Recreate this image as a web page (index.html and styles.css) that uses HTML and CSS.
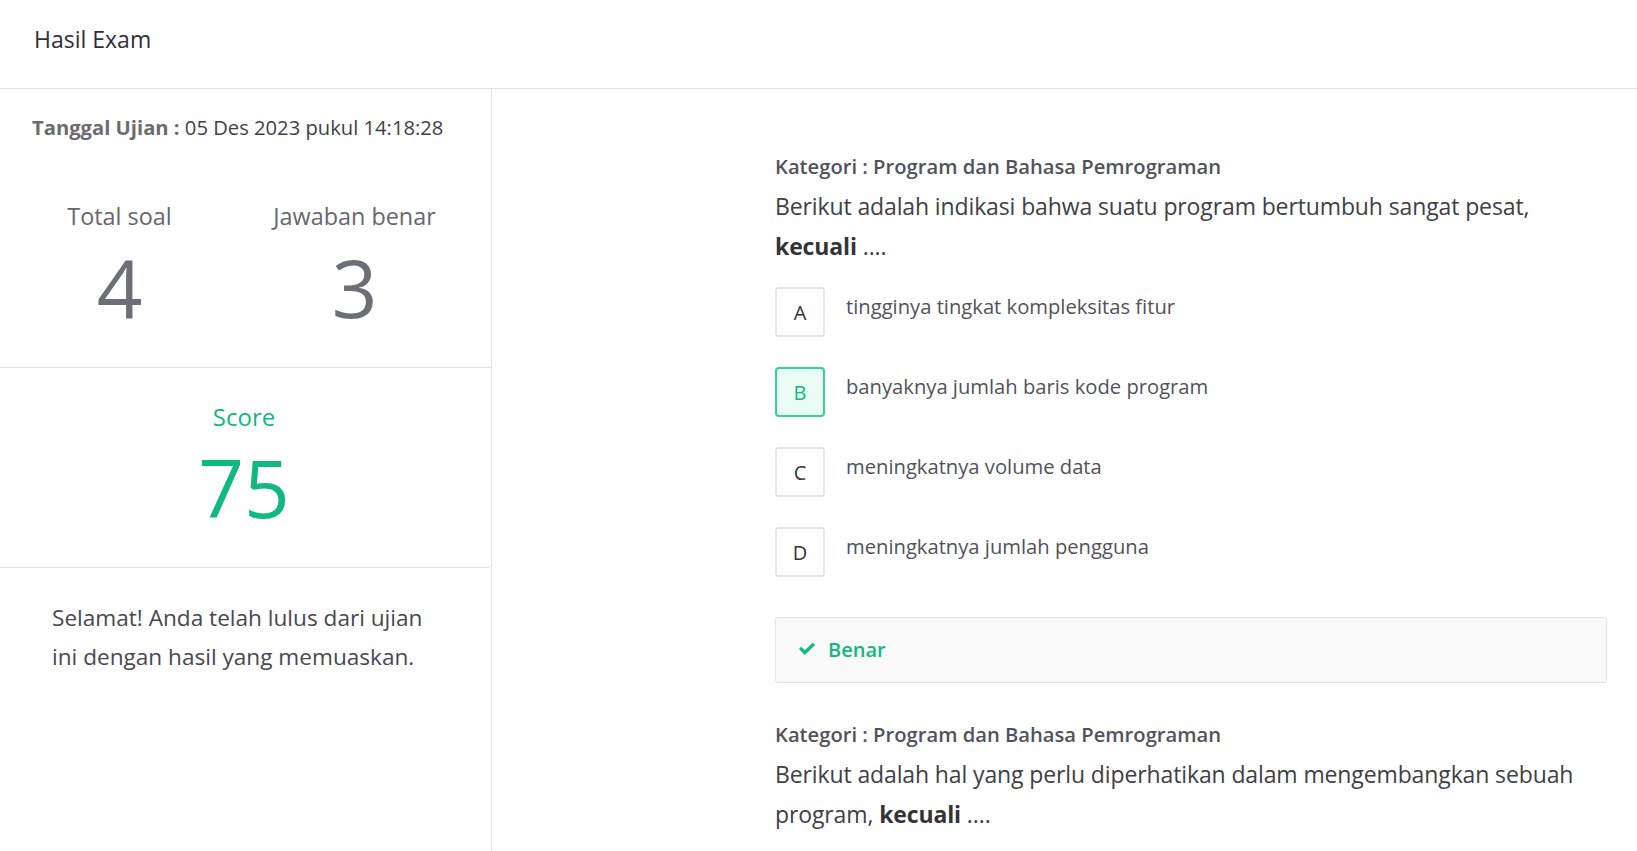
FILE: index.html
```html
<!DOCTYPE html>
<html lang="id">
<head>
<meta charset="utf-8">
<title>Hasil Exam</title>
<link rel="stylesheet" href="styles.css">
</head>
<body>
<header class="topbar">
  <h1 class="title">Hasil Exam</h1>
</header>
<main class="layout">
  <aside class="summary">
    <p class="exam-date"><strong>Tanggal Ujian :</strong> 05 Des 2023 pukul 14:18:28</p>
    <div class="stats-section">
      <div class="stats">
        <div class="stat">
          <div class="stat-label">Total soal</div>
          <div class="stat-value">4</div>
        </div>
        <div class="stat">
          <div class="stat-label">Jawaban benar</div>
          <div class="stat-value">3</div>
        </div>
      </div>
    </div>
    <div class="score-card">
      <div class="score-label">Score</div>
      <div class="score-value">75</div>
    </div>
    <p class="message">Selamat! Anda telah lulus dari ujian ini dengan hasil yang memuaskan.</p>
  </aside>
  <section class="questions">
    <div class="question-list">
      <article class="question">
        <div class="category">Kategori : Program dan Bahasa Pemrograman</div>
        <p class="question-text">Berikut adalah indikasi bahwa suatu program bertumbuh sangat pesat, <b>kecuali</b> ....</p>
        <ul class="options">
          <li class="option"><span class="opt-key">A</span><span class="opt-text">tingginya tingkat kompleksitas fitur</span></li>
          <li class="option"><span class="opt-key selected">B</span><span class="opt-text">banyaknya jumlah baris kode program</span></li>
          <li class="option"><span class="opt-key">C</span><span class="opt-text">meningkatnya volume data</span></li>
          <li class="option"><span class="opt-key">D</span><span class="opt-text">meningkatnya jumlah pengguna</span></li>
        </ul>
        <div class="result">
          <svg class="check" viewBox="0 0 16 12" width="16" height="12" aria-hidden="true"><polygon points="0,6.1 2.3,3.8 5.8,7.2 13.7,-0.3 16,2 5.8,11.9" fill="#10b981"/></svg>
          <span class="result-text">Benar</span>
        </div>
      </article>
      <article class="question">
        <div class="category">Kategori : Program dan Bahasa Pemrograman</div>
        <p class="question-text">Berikut adalah hal yang perlu diperhatikan dalam mengembangkan sebuah program, <b>kecuali</b> ....</p>
      </article>
    </div>
  </section>
</main>
</body>
</html>
```

FILE: styles.css
```css
* { box-sizing: border-box; }
html, body { margin: 0; padding: 0; }
body {
  font-family: "Open Sans", "Noto Sans", sans-serif;
  color: #444;
  background: #fff;
  height: 851px;
  overflow: hidden;
}
.topbar {
  height: 89px;
  border-bottom: 1px solid #e3e3e6;
  padding: 24px 0 0 34px;
}
.title {
  margin: 0;
  font-size: 23px;
  font-weight: 400;
  line-height: 31px;
  color: #2f2f35;
}
.layout {
  display: flex;
  height: 762px;
}
.summary {
  width: 492px;
  flex: none;
  border-right: 1px solid #e3e3e6;
  padding-top: 23px;
}
.exam-date {
  margin: 0;
  padding-left: 32px;
  font-size: 20.2px;
  line-height: 30px;
  color: #3f3f46;
}
.exam-date strong {
  font-weight: 700;
  color: #6b6b70;
}
.stats-section {
  margin-top: 58px;
  padding-bottom: 40px;
  border-bottom: 1px solid #e3e3e6;
}
.stats {
  display: flex;
  width: 470px;
  margin-left: 2px;
}
.stat {
  flex: 1;
  text-align: center;
}
.stat-label {
  font-size: 23.4px;
  line-height: 32px;
  color: #66666f;
}
.stat-value {
  margin-top: 15px;
  font-size: 80px;
  line-height: 80px;
  color: #6e6e78;
}
.score-card {
  text-align: center;
  padding: 33px 3px 40px 0;
  border-bottom: 1px solid #e3e3e6;
  border-radius: 0 4px 4px 0;
}
.score-label {
  font-size: 24px;
  line-height: 32px;
  color: #10b981;
}
.score-value {
  margin-top: 14px;
  font-size: 80px;
  line-height: 80px;
  color: #10b981;
}
.message {
  margin: 30px 0 0;
  padding: 0 50px 0 52px;
  font-size: 22.6px;
  line-height: 39px;
  color: #484852;
}
.questions {
  flex: 1;
  padding: 62px 30px 0 0;
}
.question-list {
  width: 832px;
  margin-left: auto;
}
.category {
  font-size: 20.2px;
  line-height: 30px;
  font-weight: 600;
  color: #52525a;
}
.question-text {
  margin: 5px 0 0;
  font-size: 23px;
  letter-spacing: -0.12px;
  line-height: 40px;
  color: #404046;
}
.question-text b {
  font-weight: 700;
  color: #333338;
}
.options {
  list-style: none;
  margin: 21px 0 0;
  padding: 0;
  display: flex;
  flex-direction: column;
  gap: 30px;
}
.option {
  display: flex;
  align-items: flex-start;
  gap: 21px;
}
.opt-key {
  width: 50px;
  height: 50px;
  flex: none;
  display: flex;
  align-items: center;
  justify-content: center;
  border: 2px solid #e6e6e8;
  border-radius: 4px;
  font-size: 20px;
  color: #333338;
  background: #fff;
}
.opt-key.selected {
  border-color: #34d399;
  background: #ecfdf5;
  color: #10b981;
}
.opt-text {
  padding-top: 4px;
  font-size: 20.2px;
  line-height: 30px;
  color: #52525a;
}
.result {
  margin-top: 40px;
  height: 66px;
  display: flex;
  align-items: center;
  gap: 13px;
  padding-left: 23px;
  background: #f9f9f9;
  border: 1px solid #e3e3e6;
  border-radius: 3px;
}
.check { display: block; margin-top: -2px; }
.result-text {
  font-size: 20px;
  line-height: 30px;
  font-weight: 600;
  color: #10b981;
}
.question + .question { margin-top: 36px; }
```
